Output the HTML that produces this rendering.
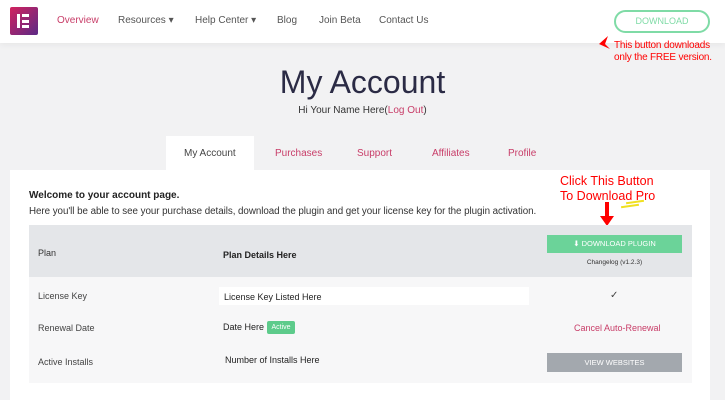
<!DOCTYPE html><html><head><style>
*{margin:0;padding:0;box-sizing:border-box}
body{width:725px;height:400px;overflow:hidden;background:#f2f2f3;font-family:"Liberation Sans",sans-serif;position:relative;color:#333}
.a{position:absolute;white-space:nowrap}
</style></head><body>
<div class="a" style="left:0;top:0;width:725px;height:43px;background:#fff;box-shadow:0 2px 6px rgba(0,0,0,0.05)"></div>
<div class="a" style="left:10px;top:7px;width:28px;height:28px;background:linear-gradient(135deg,#d2225e,#5b2a86);border-radius:2px"></div>
<div class="a" style="left:17px;top:14px;width:3px;height:14px;background:#fff"></div>
<div class="a" style="left:22px;top:14px;width:7px;height:3px;background:#fff"></div>
<div class="a" style="left:22px;top:19.5px;width:7px;height:3px;background:#fff"></div>
<div class="a" style="left:22px;top:25px;width:7px;height:3px;background:#fff"></div>
<div class="a" style="left:57px;top:15px;font-size:10px;color:#c83d68">Overview</div>
<div class="a" style="left:118px;top:15px;font-size:10px;color:#555">Resources ▾</div>
<div class="a" style="left:195px;top:15px;font-size:10px;color:#555">Help Center ▾</div>
<div class="a" style="left:277px;top:15px;font-size:10px;color:#555">Blog</div>
<div class="a" style="left:319px;top:15px;font-size:10px;color:#555">Join Beta</div>
<div class="a" style="left:379px;top:15px;font-size:10px;color:#555">Contact Us</div>
<div class="a" style="left:614px;top:10px;width:96px;height:23px;border:2px solid #7fdba6;border-radius:12px;color:#7fdba6;font-size:9px;text-align:center;line-height:19px">DOWNLOAD</div>
<svg class="a" style="left:596px;top:34px" width="18" height="18"><path d="M12 2 L3 10 L14 15 L9 10 Z" fill="#f00"/></svg>
<div class="a" style="left:614px;top:40px;font-size:10px;color:#f00;line-height:12px;letter-spacing:-0.2px">This button downloads<br>only the FREE version.</div>
<div class="a" style="left:0;top:64px;width:725px;text-align:center;font-size:32px;color:#2b2b45">My Account</div>
<div class="a" style="left:0;top:105px;width:725px;text-align:center;font-size:10px;color:#333">Hi Your Name Here(<span style="color:#c83d68">Log Out</span>)</div>
<div class="a" style="left:10px;top:170px;width:700px;height:230px;background:#fff"></div>
<div class="a" style="left:166px;top:136px;width:88px;height:34px;background:#fff"></div>
<div class="a" style="left:184px;top:148px;font-size:10px;color:#444">My Account</div>
<div class="a" style="left:275px;top:148px;font-size:10px;color:#c83d68">Purchases</div>
<div class="a" style="left:357px;top:148px;font-size:10px;color:#c83d68">Support</div>
<div class="a" style="left:432px;top:148px;font-size:10px;color:#c83d68">Affiliates</div>
<div class="a" style="left:508px;top:148px;font-size:10px;color:#c83d68">Profile</div>
<div class="a" style="left:29px;top:190px;font-size:10px;font-weight:bold;color:#222">Welcome to your account page.</div>
<div class="a" style="left:29px;top:206px;font-size:9.8px;color:#333;letter-spacing:-0.05px">Here you'll be able to see your purchase details, download the plugin and get your license key for the plugin activation.</div>
<div class="a" style="left:560px;top:174px;font-size:12.5px;color:#f00;line-height:15px">Click This Button<br>To Download Pro</div>
<div class="a" style="left:626px;top:201px;width:18px;height:2px;background:#f0e020;transform:rotate(-8deg)"></div>
<div class="a" style="left:621px;top:205px;width:18px;height:2px;background:#f0e020;transform:rotate(-8deg)"></div>
<svg class="a" style="left:600px;top:202px" width="14" height="24"><path d="M5 0h4v14h5L7 24 0 14h5z" fill="#f00"/></svg>
<div class="a" style="left:29px;top:225px;width:663px;height:52px;background:#e4e6e9"></div>
<div class="a" style="left:29px;top:277px;width:663px;height:106px;background:#f7f7f8"></div>
<div class="a" style="left:38px;top:248px;font-size:9px;color:#333">Plan</div>
<div class="a" style="left:223px;top:250px;font-size:9px;font-weight:bold;color:#222">Plan Details Here</div>
<div class="a" style="left:547px;top:235px;width:135px;height:18px;background:#6bd399;color:#fff;font-size:7.5px;text-align:center;line-height:18px">⬇ DOWNLOAD PLUGIN</div>
<div class="a" style="left:547px;top:259px;width:135px;text-align:center;font-size:6.5px;color:#333">Changelog (v1.2.3)</div>
<div class="a" style="left:38px;top:291px;font-size:9px;color:#444">License Key</div>
<div class="a" style="left:219px;top:287px;width:310px;height:18px;background:#fff"></div>
<div class="a" style="left:224px;top:292px;font-size:9px;color:#222">License Key Listed Here</div>
<div class="a" style="left:610px;top:290px;font-size:10px;color:#444">✓</div>
<div class="a" style="left:38px;top:323px;font-size:9px;color:#444">Renewal Date</div>
<div class="a" style="left:223px;top:322px;font-size:9px;color:#222">Date Here</div>
<div class="a" style="left:267px;top:321px;width:28px;height:13px;background:#5dcb8b;border-radius:2px;color:#fff;font-size:7px;text-align:center;line-height:13px">Active</div>
<div class="a" style="left:574px;top:323px;font-size:9px;color:#c83d68">Cancel Auto-Renewal</div>
<div class="a" style="left:38px;top:357px;font-size:9px;color:#444">Active Installs</div>
<div class="a" style="left:225px;top:355px;font-size:9px;color:#222">Number of Installs Here</div>
<div class="a" style="left:547px;top:353px;width:135px;height:19px;background:#a3a8ae;color:#fff;font-size:7.5px;text-align:center;line-height:19px">VIEW WEBSITES</div>
</body></html>
